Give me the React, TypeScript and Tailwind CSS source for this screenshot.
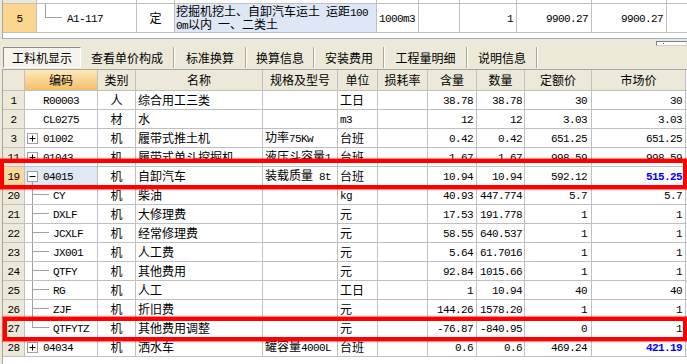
import React from 'react';

const MONO = "font-['Liberation_Mono',monospace] text-[11px] tracking-[-0.6px]";

function T({ s, bold, blue }: { s: string; bold?: boolean; blue?: boolean }) {
  const parts = s.split(/([\x00-\x7f]+)/).filter((p) => p.length > 0);
  return (
    <span className={`whitespace-pre ${blue ? 'text-[#0000ff]' : ''} ${bold ? 'font-bold' : ''}`}>
      {parts.map((p, i) =>
        /^[\x00-\x7f]+$/.test(p) ? (
          <span key={i} className={MONO}>
            {p}
          </span>
        ) : (
          <span key={i}>{p}</span>
        )
      )}
    </span>
  );
}

function Box({ minus }: { minus?: boolean }) {
  return (
    <svg width="11" height="11" viewBox="0 0 11 11" className="shrink-0 block">
      <rect x="0.5" y="0.5" width="10" height="10" fill="#ffffff" stroke="#a0a0a0" />
      <path d="M2.5 5.5H8.5" stroke="#000000" strokeWidth="1" />
      {!minus && <path d="M5.5 2.5V8.5" stroke="#000000" strokeWidth="1" />}
    </svg>
  );
}

type Row = {
  n: string;
  code: string;
  k: 'plain' | 'plus' | 'minus' | 'child' | 'last';
  t: string;
  name: string;
  spec?: string;
  unit: string;
  c: string;
  q: string;
  p: string;
  m: string;
  blue?: boolean;
  sel?: boolean;
};

const rows: Row[] = [
  { n: '1', code: 'R00003', k: 'plain', t: '人', name: '综合用工三类', unit: '工日', c: '38.78', q: '38.78', p: '30', m: '30' },
  { n: '2', code: 'CL0275', k: 'plain', t: '材', name: '水', unit: 'm3', c: '12', q: '12', p: '3.03', m: '3.03' },
  { n: '3', code: '01002', k: 'plus', t: '机', name: '履带式推土机', spec: '功率75Kw', unit: '台班', c: '0.42', q: '0.42', p: '651.25', m: '651.25' },
  { n: '11', code: '01043', k: 'plus', t: '机', name: '履带式单斗挖掘机', spec: '液压斗容量1', unit: '台班', c: '1.67', q: '1.67', p: '998.59', m: '998.59' },
  { n: '19', code: '04015', k: 'minus', t: '机', name: '自卸汽车', spec: '装载质量 8t', unit: '台班', c: '10.94', q: '10.94', p: '592.12', m: '515.25', blue: true, sel: true },
  { n: '20', code: 'CY', k: 'child', t: '机', name: '柴油', unit: 'kg', c: '40.93', q: '447.774', p: '5.7', m: '5.7' },
  { n: '21', code: 'DXLF', k: 'child', t: '机', name: '大修理费', unit: '元', c: '17.53', q: '191.778', p: '1', m: '1' },
  { n: '22', code: 'JCXLF', k: 'child', t: '机', name: '经常修理费', unit: '元', c: '58.55', q: '640.537', p: '1', m: '1' },
  { n: '23', code: 'JX001', k: 'child', t: '机', name: '人工费', unit: '元', c: '5.64', q: '61.7016', p: '1', m: '1' },
  { n: '24', code: 'QTFY', k: 'child', t: '机', name: '其他费用', unit: '元', c: '92.84', q: '1015.66', p: '1', m: '1' },
  { n: '25', code: 'RG', k: 'child', t: '机', name: '人工', unit: '工日', c: '1', q: '10.94', p: '40', m: '40' },
  { n: '26', code: 'ZJF', k: 'child', t: '机', name: '折旧费', unit: '元', c: '144.26', q: '1578.20', p: '1', m: '1' },
  { n: '27', code: 'QTFYTZ', k: 'last', t: '机', name: '其他费用调整', unit: '元', c: '-76.87', q: '-840.95', p: '0', m: '1' },
  { n: '28', code: '04034', k: 'plus', t: '机', name: '洒水车', spec: '罐容量4000L', unit: '台班', c: '0.6', q: '0.6', p: '469.24', m: '421.19', blue: true },
];

const G = 'border-r border-[#c0c0c0] shrink-0 overflow-hidden';

function CodeCell({ r }: { r: Row }) {
  const base = `w-[73px] ${G} flex items-center ${r.sel ? 'bg-[#dfe8f5]' : ''}`;
  if (r.k === 'plain') {
    return (
      <div className={`${base} justify-center`}>
        <T s={r.code} />
      </div>
    );
  }
  if (r.k === 'plus') {
    return (
      <div className={`${base} pl-[2px] gap-[5px]`}>
        <Box />
        <T s={r.code} />
      </div>
    );
  }
  if (r.k === 'minus') {
    return (
      <div className={`${base} pl-[2px] gap-[5px]`}>
        <div className="flex flex-col self-stretch w-[11px] items-center shrink-0">
          <div className="flex-1" />
          <Box minus />
          <div className="flex-1 w-0 border-l border-[#a0a0a0]" />
        </div>
        <T s={r.code} />
      </div>
    );
  }
  return (
    <div className={`${base} pl-[7px]`}>
      <div className="flex flex-col self-stretch w-[17px] shrink-0">
        <div className="h-[9px] border-l border-b border-[#a0a0a0]" />
        <div className={`flex-1 ${r.k === 'last' ? '' : 'border-l border-[#a0a0a0]'}`} />
      </div>
      <div className="ml-[4px]">
        <T s={r.code} />
      </div>
    </div>
  );
}

function DataRow({ r }: { r: Row }) {
  return (
    <div className="flex h-[19px] border-b border-[#c0c0c0] leading-none">
      <div className={`w-[22px] ${G} flex items-center justify-center ${r.sel ? 'bg-[#fad79a]' : 'bg-[#ece9d8]'}`}>
        <T s={r.n} />
      </div>
      <CodeCell r={r} />
      <div className={`w-[38px] ${G} flex items-center justify-center`}>{r.t}</div>
      <div className={`w-[127px] ${G} flex items-center pl-[2px]`}>{r.name}</div>
      <div className={`w-[75px] ${G} flex items-center pl-[2px]`}>
        <T s={r.spec ?? ''} />
      </div>
      <div className={`w-[40px] ${G} flex items-center pl-[2px]`}>
        <T s={r.unit} />
      </div>
      <div className={`w-[50px] ${G}`} />
      <div className={`w-[49px] ${G} flex items-center justify-end pr-[3px]`}>
        <T s={r.c} />
      </div>
      <div className={`w-[48px] ${G} flex items-center justify-end pr-[2px]`}>
        <T s={r.q} />
      </div>
      <div className={`w-[67px] ${G} flex items-center justify-end pr-[4px]`}>
        <T s={r.p} />
      </div>
      <div className={`w-[94px] ${G} flex items-center justify-end pr-[3px]`}>
        <T s={r.m} bold={r.blue} blue={r.blue} />
      </div>
    </div>
  );
}

const headers: { label: string; w: string; hl?: boolean }[] = [
  { label: '', w: 'w-[22px]' },
  { label: '编码', w: 'w-[73px]', hl: true },
  { label: '类别', w: 'w-[38px]' },
  { label: '名称', w: 'w-[127px]' },
  { label: '规格及型号', w: 'w-[75px]' },
  { label: '单位', w: 'w-[40px]' },
  { label: '损耗率', w: 'w-[50px]' },
  { label: '含量', w: 'w-[49px]' },
  { label: '数量', w: 'w-[48px]' },
  { label: '定额价', w: 'w-[67px]' },
  { label: '市场价', w: 'w-[94px]' },
];

const tabs: { label: string; w: string }[] = [
  { label: '查看单价构成', w: 'w-[92px]' },
  { label: '标准换算', w: 'w-[70px]' },
  { label: '换算信息', w: 'w-[66px]' },
  { label: '安装费用', w: 'w-[68px]' },
  { label: '工程量明细', w: 'w-[81px]' },
  { label: '说明信息', w: 'w-[68px]' },
];

export default function App() {
  return (
    <div className="relative w-[687px] h-[364px] overflow-hidden bg-[#ece9d8] text-[12px] text-black font-['Noto_Sans_CJK_SC',sans-serif] flex flex-col">
      {/* Top grid panel */}
      <div className="ml-[2px] h-[39px] shrink-0 border-l border-b border-l-[#a6a6a6] border-b-[#9bb0c6] bg-white flex flex-col">
        <div className="flex h-[4px] border-b border-[#c0c0c0]">
          <div className={`w-[34px] ${G} bg-[#ece9d8]`} />
          <div className={`w-[100px] ${G}`} />
          <div className={`w-[38px] ${G}`} />
          <div className={`w-[202px] ${G}`} />
          <div className={`w-[42px] ${G}`} />
          <div className={`w-[41px] ${G}`} />
          <div className={`w-[57px] ${G}`} />
          <div className={`w-[75px] ${G}`} />
          <div className={`w-[75px] ${G}`} />
        </div>
        <div className="flex h-[29px] border-b border-[#c0c0c0] leading-none">
          <div className={`w-[34px] ${G} bg-[#fcd58e] flex items-center justify-center`}>
            <T s="5" />
          </div>
          <div className={`w-[100px] ${G} flex items-center pl-[8px]`}>
            <div className="flex flex-col self-stretch w-[17px] shrink-0">
              <div className="h-[14px] border-l border-b border-[#a0a0a0]" />
            </div>
            <div className="ml-[5px]">
              <T s="A1-117" />
            </div>
          </div>
          <div className={`w-[38px] ${G} flex items-center justify-center`}>定</div>
          <div className={`w-[202px] ${G} bg-[#dde7f5] flex flex-col pl-[1px] pt-[1px]`}>
            <div className="h-[13px] flex items-center whitespace-nowrap">
              <T s="挖掘机挖土、自卸汽车运土 运距100" />
            </div>
            <div className="h-[13px] flex items-center whitespace-nowrap">
              <T s="0m以内 一、二类土" />
            </div>
          </div>
          <div className={`w-[42px] ${G} flex items-center pl-[2px]`}>
            <T s="1000m3" />
          </div>
          <div className={`w-[41px] ${G}`} />
          <div className={`w-[57px] ${G} flex items-center justify-end pr-[3px]`}>
            <T s="1" />
          </div>
          <div className={`w-[75px] ${G} flex items-center justify-end pr-[3px]`}>
            <T s="9900.27" />
          </div>
          <div className={`w-[75px] ${G} flex items-center justify-end pr-[3px]`}>
            <T s="9900.27" />
          </div>
        </div>
      </div>

      {/* Tab bar */}
      <div className="h-[30px] shrink-0 flex flex-col">
        <div className="mt-[2px] h-[5px] flex justify-end">
          <div className="w-[31px] h-[5px] border-t border-l border-[#808080] bg-white border-b border-r border-b-[#d4d0c8] border-r-[#d4d0c8] flex items-center pl-[6px]">
            <div className="w-[1px] h-[1px] bg-[#404040]" />
          </div>
        </div>
        <div className="mt-[1px] h-[21px] flex items-stretch leading-none">
          <div className="ml-[3px] w-[78px] border-t border-l border-[#8c8c8c] border-b border-r border-b-white border-r-white bg-[#f6f4ec] flex items-center justify-center">
            工料机显示
          </div>
          {tabs.map((t) => (
            <React.Fragment key={t.label}>
              <div className={`${t.w} shrink-0 flex items-center justify-center`}>{t.label}</div>
              <div className="flex shrink-0">
                <div className="w-[1px] bg-[#aca899]" />
                <div className="w-[1px] bg-white" />
              </div>
            </React.Fragment>
          ))}
        </div>
      </div>

      {/* Main grid */}
      <div className="ml-[2px] flex-1 border-l border-t border-[#a6a6a6] bg-white flex flex-col">
        <div className="flex h-[21px] border-b border-[#c0c0c0] leading-none shrink-0">
          {headers.map((h, i) => (
            <div
              key={i}
              className={`${h.w} ${G} flex items-center justify-center ${
                h.hl ? 'bg-linear-to-b from-[#fde9bd] to-[#f3bf62]' : 'bg-[#ece9d8]'
              }`}
            >
              {h.label}
            </div>
          ))}
        </div>
        {rows.map((r) => (
          <DataRow key={r.n} r={r} />
        ))}
      </div>

      {/* Red annotation boxes */}
      <div className="absolute left-0 top-[159px] w-[687px] h-[30px] border-4 border-[#ff0000] shadow-[0_0_1px_1px_rgba(255,0,0,0.45)] pointer-events-none" />
      <div className="absolute left-[3px] top-[317px] w-[684px] h-[24px] border-4 border-[#ff0000] shadow-[0_0_1px_1px_rgba(255,0,0,0.45)] pointer-events-none" />
    </div>
  );
}
